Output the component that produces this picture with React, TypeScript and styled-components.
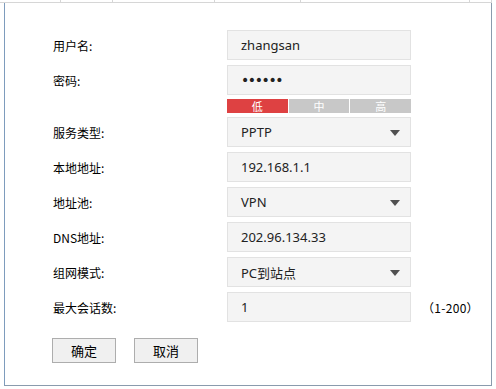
import React from 'react';
import styled, {createGlobalStyle} from 'styled-components';

const GlobalStyle = createGlobalStyle`
	html, body {
		margin: 0;
		padding: 0;
		background: #ffffff;
	}
	body {
		font-family: "Noto Sans", "Noto Sans CJK SC", sans-serif;
		color: #000;
	}
`;

const Page = styled.div`
	width: 496px;
	height: 389px;
	overflow: hidden;
	background: #ffffff;
`;

const HeaderStrip = styled.div`
	display: flex;
	width: 492px;
	height: 3px;
`;

const HeaderCell = styled.div<{$w: number}>`
	flex: 0 0 ${({$w}) => $w}px;
	box-sizing: border-box;
	height: 3px;
	border-bottom: 1px solid #d6d6d6;
	border-right: 1px solid #d6d6d6;
`;

const Panel = styled.div`
	box-sizing: border-box;
	margin-left: 4px;
	width: 488px;
	height: 383px;
	border-left: 1px solid #7e9cbd;
	border-right: 1px solid #8a9bad;
	border-bottom: 1px solid #8a9bad;
	padding: 27px 0 0 48px;
`;

const Form = styled.div`
	display: flex;
	flex-direction: column;
	gap: 5px;
`;

const Row = styled.div`
	display: flex;
	align-items: center;
	height: 30px;
`;

const Label = styled.div`
	width: 174px;
	font-family: "Noto Sans CJK SC", "Noto Sans", sans-serif;
	font-size: 12px;
	color: #000;
`;

const Field = styled.div`
	position: relative;
	box-sizing: border-box;
	width: 184px;
	height: 30px;
	display: flex;
	align-items: center;
	padding-left: 13px;
	background: #f4f4f4;
	border: 1px solid #e2e2e2;
	font-family: "Noto Sans", "Noto Sans CJK SC", sans-serif;
	font-size: 13px;
	color: #222;
`;

const Dots = styled.span`
	font-family: "DejaVu Sans", sans-serif;
	font-size: 14px;
	line-height: 1;
	letter-spacing: -1.4px;
	color: #222;
`;

const Caret = styled.span`
	position: absolute;
	right: 10px;
	top: 12px;
	width: 0;
	height: 0;
	border-left: 5px solid transparent;
	border-right: 5px solid transparent;
	border-top: 6px solid #505050;
`;

const Hint = styled.div`
	margin-left: 11px;
	font-family: "Noto Sans CJK SC", "Noto Sans", sans-serif;
	font-size: 12px;
	letter-spacing: 0.3px;
	color: #000;
`;

const StrengthRow = styled.div`
	display: flex;
	margin: -1px 0 -1px 174px;
	width: 184px;
	height: 14px;
	gap: 1px;
`;

const Level = styled.div<{$on?: boolean}>`
	flex: 1;
	display: flex;
	align-items: center;
	justify-content: center;
	background: ${({$on}) => ($on ? '#de4142' : '#c8c8c8')};
	color: #ffffff;
	font-family: "Noto Sans CJK SC", sans-serif;
	font-size: 11px;
	line-height: 13px;
`;

const Buttons = styled.div`
	display: flex;
	gap: 18px;
	margin: 16px 0 0 -1px;
`;

const Button = styled.button`
	box-sizing: border-box;
	width: 64px;
	height: 25px;
	padding: 0;
	background: #f0f0f0;
	border: 1px solid #adadad;
	font-family: "Noto Sans CJK SC", sans-serif;
	font-size: 13px;
	color: #000;
`;

interface FieldRow {
	label: string;
	value: string;
	select?: boolean;
}

const rows: FieldRow[] = [
	{label: '服务类型:', value: 'PPTP', select: true},
	{label: '本地地址:', value: '192.168.1.1'},
	{label: '地址池:', value: 'VPN', select: true},
	{label: 'DNS地址:', value: '202.96.134.33'},
	{label: '组网模式:', value: 'PC到站点', select: true},
];

export default function App() {
	return (
		<Page>
			<GlobalStyle />
			<HeaderStrip>
				{[61, 52, 102, 86, 169, 22].map((w, i) => (
					<HeaderCell key={i} $w={w} />
				))}
			</HeaderStrip>
			<Panel>
				<Form>
					<Row>
						<Label>用户名:</Label>
						<Field>zhangsan</Field>
					</Row>
					<Row>
						<Label>密码:</Label>
						<Field>
							<Dots>••••••</Dots>
						</Field>
					</Row>
					<StrengthRow>
						<Level $on>低</Level>
						<Level>中</Level>
						<Level>高</Level>
					</StrengthRow>
					{rows.map(r => (
						<Row key={r.label}>
							<Label>{r.label}</Label>
							<Field>
								{r.value}
								{r.select && <Caret />}
							</Field>
						</Row>
					))}
					<Row>
						<Label>最大会话数:</Label>
						<Field>1</Field>
						<Hint>（1-200）</Hint>
					</Row>
				</Form>
				<Buttons>
					<Button>确定</Button>
					<Button>取消</Button>
				</Buttons>
			</Panel>
		</Page>
	);
}
